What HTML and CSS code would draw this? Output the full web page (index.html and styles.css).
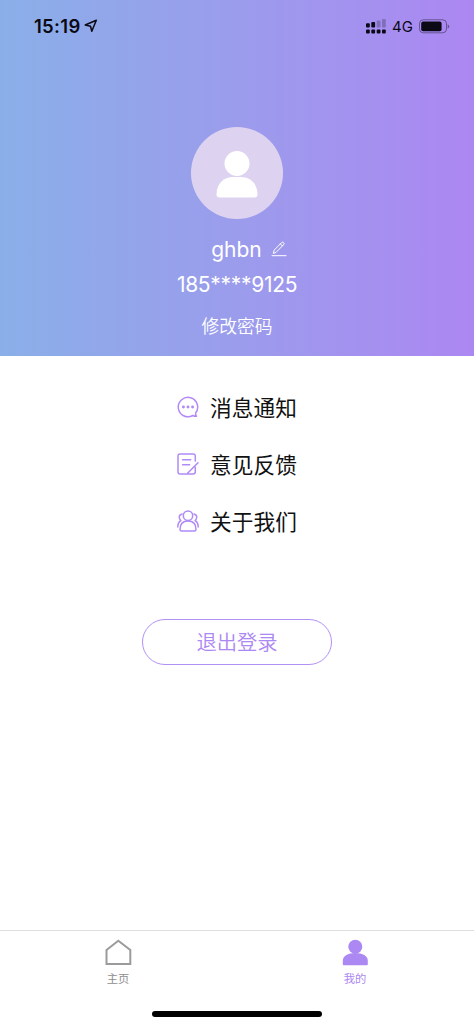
FILE: index.html
```html
<!DOCTYPE html>
<html lang="zh-CN">
<head>
<meta charset="utf-8">
<meta name="viewport" content="width=device-width, initial-scale=1">
<title>我的</title>
<link rel="stylesheet" href="styles.css">
</head>
<body>
<div class="app">
  <header class="profile">
    <div class="status">
      <div class="status-left">
        <span class="time">15:19</span>
        <svg class="location" width="14" height="14" viewBox="0 0 14 14" fill="none" stroke="#0b0914" stroke-width="1.5" stroke-linejoin="round"><path d="M12.3 1.3 1.2 6l5.300 1.200 1.300 5z"/></svg>
      </div>
      <div class="status-right">
        <svg width="20" height="15" viewBox="0 0 20 15" fill="#0b0914"><rect x="0" y="4.200" width="3.800" height="4.400" rx="1"/><rect x="5.300" y="3" width="3.800" height="5.600" rx="1"/><g opacity=".24"><rect x="10.700" y="1.600" width="3.800" height="7" rx="1"/><rect x="16" y="0" width="3.800" height="8.600" rx="1"/></g><rect x="0" y="10.500" width="3.800" height="3.900" rx="1"/><rect x="5.300" y="10.500" width="3.800" height="3.900" rx="1"/><rect x="10.700" y="10.500" width="3.800" height="3.900" rx="1"/><rect x="16" y="10.500" width="3.800" height="3.900" rx="1"/></svg>
        <span class="network">4G</span>
        <svg width="31" height="15" viewBox="0 0 31 15"><rect x=".5" y=".8" width="27" height="13" rx="3.800" fill="none" stroke="#0b0914" stroke-opacity=".42"/><rect x="2.200" y="2.400" width="20.400" height="9.800" rx="2" fill="#0b0914"/><path d="M28.700 5.200q1.600 .7 1.600 2.200t-1.600 2.200z" fill="#0b0914" opacity=".42"/></svg>
      </div>
    </div>
    <div class="avatar">
      <svg width="42" height="48" viewBox="0 0 42 48" fill="#fff"><circle cx="21" cy="12.500" r="12.500"/><path d="M.5 43.500C.5 31.500 9 26 17 26h8c8 0 16.500 5.500 16.500 17.500q0 3-3 3h-35q-3 0-3-3z"/></svg>
    </div>
    <div class="name-row">
      <span class="name">ghbn</span>
      <svg class="edit" width="16" height="16" viewBox="0 0 16 16" fill="none" stroke="#fff" stroke-linecap="round" stroke-linejoin="round"><path d="M2.400 12 3.200 9.100 10.600 1.600q1-.9 2 .1t0 2L5.200 11.200zM9.400 2.900l2 2M1 14.700h14"/></svg>
    </div>
    <div class="phone">185****9125</div>
    <a class="password">修改密码</a>
  </header>

  <main class="content">
    <nav class="menu">
      <a class="item">
        <svg class="item-icon" viewBox="0 0 22 22" fill="none"><path d="M18.500 17.200A9.700 9.700 0 1 0 15.800 19.500q1.800 1 3.700 .8-1-1.300-1-3.100" stroke-width="1.500" stroke-linejoin="round"/><g class="dots"><circle cx="6.400" cy="11" r="1.450"/><circle cx="11" cy="11" r="1.450"/><circle cx="15.600" cy="11" r="1.450"/></g></svg>
        <span>消息通知</span>
      </a>
      <a class="item">
        <svg class="item-icon" viewBox="0 0 22 22" fill="none" stroke-width="1.500" stroke-linecap="round" stroke-linejoin="round"><path d="M18.300 8V3.200Q18.300 1 16.100 1H3.200Q1 1 1 3.200v15.500Q1 21 3.200 21h12.900q2.200 0 2.200-2.200v-4.600M5.600 6.700h8.100M5.600 11.700h7M21 9.800 10.800 20"/></svg>
        <span>意见反馈</span>
      </a>
      <a class="item">
        <svg class="item-icon" viewBox="0 0 22 22" fill="none" stroke-width="1.500" stroke-linecap="round" stroke-linejoin="round"><circle cx="11" cy="5.700" r="4.700"/><path d="M4.600 21Q3 21 3 19.500q0-8.500 8-8.500t8 8.500q0 1.500-1.600 1.500zM5 4Q1.700 4.800 2.400 8.200q.3 1.500 1.500 2.300Q.8 12.500 .8 17M17 4q3.300 .8 2.600 4.200-.3 1.500-1.500 2.300 3.100 2 3.100 6.500"/></svg>
        <span>关于我们</span>
      </a>
    </nav>
    <button class="logout">退出登录</button>
  </main>

  <footer class="footer">
    <nav class="tabs">
      <a class="tab">
        <svg width="27" height="28" viewBox="0 0 27 28" fill="none" stroke="#9b9b9b" stroke-width="2"><path d="M1.500 11 13.300 1.800 25.300 11v14H1.500z"/></svg>
        <span>主页</span>
      </a>
      <a class="tab active">
        <svg width="27" height="28" viewBox="0 0 27 28"><circle cx="13.300" cy="7.700" r="7"/><path d="M.8 25.300v-3.500C.8 17 6 14 13.300 14s12.500 3 12.500 7.800v3.500q0 .9-.9 .9H1.700q-.9 0-.9-.9z"/></svg>
        <span>我的</span>
      </a>
    </nav>
    <div class="home-bar"></div>
  </footer>
</div>
</body>
</html>
```
FILE: styles.css
```css
* { box-sizing: border-box; }

body {
  margin: 0;
  background: #fff;
  font-family: Inter, "Noto Sans CJK SC", sans-serif;
}

svg { display: block; flex: none; }

.app {
  display: flex;
  flex-direction: column;
  height: 1026px;
}

.profile {
  display: flex;
  flex-direction: column;
  align-items: center;
  height: 355.500px;
  color: #fff;
  background: linear-gradient(90deg, #8aafe8, #9b9cec 50%, #ac87f2);
}

.status {
  display: flex;
  justify-content: space-between;
  align-items: center;
  width: 100%;
  height: 52px;
  padding: 0 24px 0 34px;
  color: #0b0914;
}

.status-left,
.status-right { display: flex; align-items: center; }

.time {
  font-size: 18.500px;
  font-weight: 600;
  letter-spacing: 0.3px;
}

.location { margin-left: 3px; }

.network {
  margin: 0 6px;
  font-size: 15px;
  font-weight: 400;
  line-height: 20px;
  padding-top: 1px;
}

.avatar {
  display: flex;
  justify-content: center;
  width: 92px;
  height: 92px;
  margin-top: 75px;
  padding-top: 24px;
  border-radius: 50%;
  background: #ddd3f0;
}

.name-row {
  display: flex;
  align-items: center;
  height: 34px;
  margin: 14px 0 0 24px;
}

.name {
  font-size: 21px;
  line-height: 34px;
}

.edit {
  margin: -3px 0 0 9px;
}

.phone {
  height: 34px;
  margin-top: 1px;
  font-size: 21px;
  letter-spacing: -0.300px;
  line-height: 34px;
}

.password {
  margin-top: 12px;
  font-size: 17.800px;
  font-weight: 350;
  line-height: 26px;
}

.content {
  display: flex;
  flex: 1;
  flex-direction: column;
  align-items: center;
}

.menu { padding-top: 23px; }

.item {
  display: flex;
  align-items: center;
  gap: 11px;
  height: 57.200px;
  color: #111;
  font-size: 21.700px;
}

.item span { padding-bottom: 2px; }

.item-icon {
  width: 22px;
  height: 22px;
  stroke: #b08af6;
}

.dots { fill: #b08af6; stroke: none; }

.logout {
  width: 190px;
  height: 46px;
  margin-top: 68.500px;
  padding: 1px 0 0;
  border: 1.500px solid #b390f4;
  border-radius: 23px;
  background: #fff;
  color: #ac88f2;
  font: 350 20.300px/43px Inter, "Noto Sans CJK SC", sans-serif;
}

.footer {
  height: 96px;
  border-top: 1px solid #dedede;
}

.tabs {
  display: flex;
  height: 80px;
}

.tab {
  display: flex;
  flex: 1;
  flex-direction: column;
  align-items: center;
  padding-top: 8px;
  color: #8e8e8e;
  font-size: 11.300px;
  line-height: 16px;
}

.tab span {
  margin: 4px 1px 0 0;
}

.active {
  color: #ac88f2;
  fill: #ac88f2;
}

.home-bar {
  width: 170px;
  height: 6px;
  margin: 0 auto;
  border-radius: 3px;
  background: #000;
}
```
